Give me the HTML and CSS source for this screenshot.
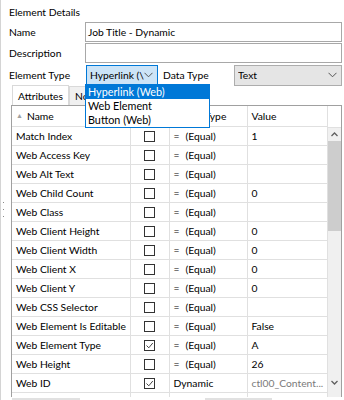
FILE: index.html
```html
<!DOCTYPE html>
<html lang="en">
<head>
    <meta charset="UTF-8">
    <title>Element Details</title>
    <link rel="stylesheet" href="styles.css">
</head>
<body>
    <!-- Splitter on the left edge -->
    <div class="splitter">
        <span class="grip"></span>
        <span class="grip"></span>
        <span class="grip"></span>
    </div>

    <div class="panel">
        <div class="section-title">Element Details</div>

        <div class="field-row">
            <label class="field-label">Name</label>
            <div class="textbox">Job Title - Dynamic</div>
        </div>
        <div class="field-row">
            <label class="field-label">Description</label>
            <div class="textbox"></div>
        </div>

        <div class="field-row type-row">
            <label class="field-label">Element Type</label>
            <div class="combo combo-open">
                <span class="combo-text">Hyperlink (\</span>
                <svg class="chevron" width="9" height="6" viewBox="0 0 9 6"><path d="M0.5 0.8 L4.5 4.8 L8.5 0.8" fill="none" stroke="#555" stroke-width="1"/></svg>
                <!-- open dropdown list -->
                <ul class="dropdown">
                    <li class="selected">Hyperlink (Web)</li>
                    <li>Web Element</li>
                    <li>Button (Web)</li>
                </ul>
            </div>
            <label class="data-label">Data Type</label>
            <div class="combo combo-gray">
                <span class="combo-text">Text</span>
                <svg class="chevron" width="9" height="6" viewBox="0 0 9 6"><path d="M0.5 0.8 L4.5 4.8 L8.5 0.8" fill="none" stroke="#555" stroke-width="1"/></svg>
            </div>
        </div>

        <div class="tabs">
            <div class="tab active">Attributes</div>
            <div class="tab">Notes</div>
        </div>

        <div class="grid">
            <table class="attr-table">
                <colgroup>
                    <col class="col-name">
                    <col class="col-check">
                    <col class="col-type">
                    <col class="col-value">
                </colgroup>
                <thead>
                    <tr>
                        <th><span class="sort">&#9650;</span>Name</th>
                        <th></th>
                        <th>Match Type</th>
                        <th>Value</th>
                    </tr>
                </thead>
                <tbody id="rows"></tbody>
            </table>
            <div class="vscroll">
                <div class="vscroll-head"></div>
                <div class="vscroll-btn">
                    <svg width="7" height="5" viewBox="0 0 7 5"><path d="M0.5 4 L3.5 1 L6.5 4" fill="none" stroke="#606060" stroke-width="1.3"/></svg>
                </div>
                <div class="vscroll-thumb"></div>
                <div class="vscroll-track"></div>
                <div class="vscroll-btn">
                    <svg width="7" height="5" viewBox="0 0 7 5"><path d="M0.5 1 L3.5 4 L6.5 1" fill="none" stroke="#606060" stroke-width="1.3"/></svg>
                </div>
                <div class="vscroll-rest"></div>
            </div>
        </div>

        <div class="buttons">
            <span class="btn-edge left"></span>
            <span class="btn-edge right"></span>
        </div>
    </div>

    <script>
        const attributes = [
            ['Match Index', false, '= (Equal)', '1'],
            ['Web Access Key', false, '= (Equal)', ''],
            ['Web Alt Text', false, '= (Equal)', ''],
            ['Web Child Count', false, '= (Equal)', '0'],
            ['Web Class', false, '= (Equal)', ''],
            ['Web Client Height', false, '= (Equal)', '0'],
            ['Web Client Width', false, '= (Equal)', '0'],
            ['Web Client X', false, '= (Equal)', '0'],
            ['Web Client Y', false, '= (Equal)', '0'],
            ['Web CSS Selector', false, '= (Equal)', ''],
            ['Web Element Is Editable', false, '= (Equal)', 'False'],
            ['Web Element Type', true, '= (Equal)', 'A'],
            ['Web Height', false, '= (Equal)', '26'],
            ['Web ID', true, 'Dynamic', 'ctl00_Content...'],
            ['Web Id Path', false, '= (Equal)', '']
        ];

        const tbody = document.getElementById('rows');
        attributes.forEach(([name, checked, match, value]) => {
            const tr = document.createElement('tr');
            const matchHtml = match.startsWith('=')
                ? '<span class="eq">=</span>(Equal)'
                : match;
            const valueClass = match === 'Dynamic' ? 'value dim' : 'value';
            tr.innerHTML =
                '<td>' + name + '</td>' +
                '<td class="check-cell"><span class="checkbox' + (checked ? ' checked' : '') + '">' +
                (checked ? '<svg width="9" height="9" viewBox="0 0 9 9"><path d="M1.5 4.5 L3.8 6.8 L7.8 2" fill="none" stroke="#444" stroke-width="1"/></svg>' : '') +
                '</span></td>' +
                '<td>' + matchHtml + '</td>' +
                '<td class="' + valueClass + '">' + value + '</td>';
            tbody.appendChild(tr);
        });
    </script>
</body>
</html>
```

FILE: styles.css
```css
body {
    margin: 0;
    padding: 0;
    width: 344px;
    height: 400px;
    overflow: hidden;
    display: flex;
    background: #ffffff;
    font-family: "Lato", "Noto Sans", sans-serif;
    font-size: 10.3px;
    color: #000;
}

/* Left splitter */
.splitter {
    width: 6px;
    border-left: 1px solid #d4d4d4;
    display: flex;
    flex-direction: column;
    align-items: center;
    gap: 6px;
    padding-top: 202px;
    box-sizing: border-box;
}

.grip {
    width: 1px;
    height: 1px;
    background: #8a8a8a;
}

.panel {
    flex: 1;
    padding: 5px 2px 0 3px;
    display: flex;
    flex-direction: column;
}

.section-title {
    height: 16px;
    line-height: 14px;
}

.field-row {
    display: flex;
    align-items: center;
    height: 20px;
    margin-top: 1px;
}

.field-label {
    width: 76px;
}

.textbox {
    flex: 1;
    height: 18px;
    line-height: 18px;
    border: 1px solid #a8a8a8;
    padding-left: 2px;
}

.type-row {
    height: 22px;
    margin-top: 1px;
}

.combo {
    position: relative;
    height: 18px;
    display: flex;
    align-items: center;
    padding: 0 4px 0 3px;
}

.combo-open {
    width: 63px;
    margin-left: 1px;
    background: #cce4f7;
    border: 1px solid #0078d7;
}

.combo-gray {
    flex: 1;
    height: 19px;
    background: #e5e5e5;
    border: 1px solid #adadad;
}

.combo-text {
    flex: 1;
    white-space: nowrap;
    overflow: hidden;
}

.chevron {
    flex: none;
}

.data-label {
    width: 71px;
    margin-left: 5px;
}

/* Dropdown list shown over the tabs */
.dropdown {
    position: absolute;
    top: 18px;
    left: -2px;
    width: 123px;
    margin: 0;
    padding: 0;
    list-style: none;
    background: #fff;
    border: 1px solid #0078d7;
    z-index: 10;
    font-size: 10.8px;
}

.dropdown li {
    height: 14px;
    line-height: 14px;
    padding-left: 2px;
}

.dropdown li.selected {
    background: #0078d7;
    color: #fff;
}

/* Tabs */
.tabs {
    display: flex;
    padding-left: 3px;
    height: 19px;
}

.tab {
    padding: 0 5px;
    line-height: 18px;
    border: 1px solid #d9d9d9;
    border-bottom: none;
    background: #f0f0f0;
}

.tab.active {
    background: #fff;
    height: 19px;
    margin-top: -1px;
    line-height: 20px;
}

/* Attribute grid */
.grid {
    display: flex;
    margin-left: 2px;
    border: 1px solid #a0a0a0;
    border-bottom: none;
    flex: 1;
    overflow: hidden;
}

.attr-table {
    border-collapse: collapse;
    table-layout: fixed;
    width: 315px;
    align-self: flex-start;
}

.col-name { width: 118px; }
.col-check { width: 39px; }
.col-type { width: 78px; }
.col-value { width: 80px; }

.attr-table th,
.attr-table td {
    height: 18px;
    padding: 0 0 0 4px;
    text-align: left;
    font-weight: normal;
    white-space: nowrap;
    overflow: hidden;
    border-right: 1px solid #e0e0e0;
    border-bottom: 1px solid #e0e0e0;
}

.attr-table th {
    height: 20px;
}

.sort {
    color: #a0a0a0;
    font-size: 7px;
    margin-right: 4px;
    vertical-align: 2px;
}

.check-cell {
    text-align: center !important;
    padding: 0 !important;
}

.checkbox {
    display: inline-block;
    width: 11px;
    height: 11px;
    border: 1px solid #333;
    box-sizing: border-box;
    vertical-align: middle;
}

.checkbox svg {
    display: block;
}

.eq {
    display: inline-block;
    width: 12px;
}

.value.dim {
    color: #7a7a7a;
}

/* Vertical scrollbar */
.vscroll {
    width: 13px;
    display: flex;
    flex-direction: column;
    background: #f0f0f0;
}

.vscroll-head {
    height: 21px;
    background: #fff;
    border-bottom: 1px solid #e0e0e0;
}

.vscroll-btn {
    height: 13px;
    display: flex;
    align-items: center;
    justify-content: center;
}

.vscroll-thumb {
    height: 90px;
    background: #cdcdcd;
}

.vscroll-track {
    flex: 1;
}

.vscroll-rest {
    height: 8px;
}

.buttons {
    height: 3px;
    position: relative;
}

.btn-edge {
    position: absolute;
    top: 1px;
    height: 2px;
    background: #e1e1e1;
}

.btn-edge.left {
    left: 3px;
    width: 68px;
}

.btn-edge.right {
    left: 196px;
    width: 67px;
}
```
